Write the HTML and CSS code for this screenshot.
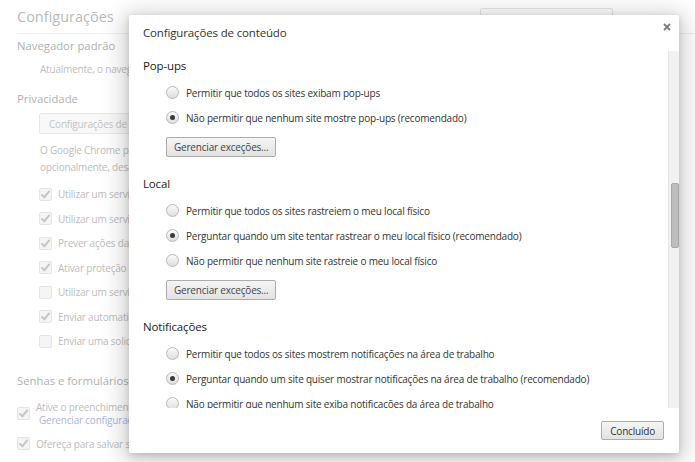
FILE: index.html
```html
<!DOCTYPE html>
<html lang="pt-BR">
<head>
    <meta charset="UTF-8">
    <title>Configurações de conteúdo</title>
    <link rel="stylesheet" href="styles.css">
</head>
<body>

    <!-- Página de configurações (atrás do diálogo) -->
    <div class="page">
        <header class="page-header">
            <h1>Configurações</h1>
            <div class="search"></div>
        </header>

        <section class="bg-section">
            <h2>Navegador padrão</h2>
            <p class="bg-text">Atualmente, o navegador padrão é o Google Chrome.</p>
        </section>

        <section class="bg-section">
            <h2>Privacidade</h2>
            <div class="bg-indent">
                <div class="bg-buttons">
                    <button class="bg-btn">Configurações de conteúdo...</button>
                    <button class="bg-btn">Limpar dados de navegação...</button>
                </div>
                <p class="bg-text para">O Google Chrome pode usar serviços da web para melhorar sua experiência de navegação. Você pode<br>opcionalmente, desativar esses serviços.</p>
                <ul class="checks">
                    <li><span class="cb on"></span>Utilizar um serviço da web para ajudar a resolver erros de navegação</li>
                    <li><span class="cb on"></span>Utilizar um serviço de previsão para ajudar a completar pesquisas</li>
                    <li><span class="cb on"></span>Prever ações da rede para melhorar o desempenho de carregamento</li>
                    <li><span class="cb on"></span>Ativar proteção contra phishing e malware</li>
                    <li><span class="cb"></span>Utilizar um serviço da web para ajudar a resolver erros de ortografia</li>
                    <li><span class="cb on"></span>Enviar automaticamente estatísticas de uso e relatórios de erros</li>
                    <li><span class="cb"></span>Enviar uma solicitação "Não rastrear" com seu tráfego de navegação</li>
                </ul>
            </div>
        </section>

        <section class="bg-section">
            <h2 class="wide">Senhas e formulários</h2>
            <ul class="checks bg-indent">
                <li class="two-line"><span class="cb on"></span><span>Ative o preenchimento automático para preencher formulários<br><a class="bg-link">Gerenciar configurações de preenchimento automático</a></span></li>
                <li><span class="cb on"></span>Ofereça para salvar suas senhas da web</li>
            </ul>
        </section>
    </div>

    <!-- Diálogo -->
    <div class="dialog">
        <div class="dialog-header">
            <h3>Configurações de conteúdo</h3>
            <svg class="close" width="8" height="8" viewBox="0 0 8 8">
                <path d="M1 1 L7 7 M7 1 L1 7" stroke="#7a7a7a" stroke-width="1.8" fill="none"/>
            </svg>
        </div>

        <div class="dialog-body">
            <div class="content">
                <div class="group">
                    <h4>Pop-ups</h4>
                    <div class="option"><span class="radio"></span>Permitir que todos os sites exibam pop-ups</div>
                    <div class="option"><span class="radio on"></span>Não permitir que nenhum site mostre pop-ups (recomendado)</div>
                    <button class="btn">Gerenciar exceções...</button>
                </div>

                <div class="group">
                    <h4>Local</h4>
                    <div class="option"><span class="radio"></span>Permitir que todos os sites rastreiem o meu local físico</div>
                    <div class="option"><span class="radio on"></span>Perguntar quando um site tentar rastrear o meu local físico (recomendado)</div>
                    <div class="option"><span class="radio"></span>Não permitir que nenhum site rastreie o meu local físico</div>
                    <button class="btn">Gerenciar exceções...</button>
                </div>

                <div class="group">
                    <h4>Notificações</h4>
                    <div class="option"><span class="radio"></span>Permitir que todos os sites mostrem notificações na área de trabalho</div>
                    <div class="option"><span class="radio on"></span>Perguntar quando um site quiser mostrar notificações na área de trabalho (recomendado)</div>
                    <div class="option"><span class="radio"></span>Não permitir que nenhum site exiba notificações da área de trabalho</div>
                    <button class="btn">Gerenciar exceções...</button>
                </div>
            </div>

            <div class="scrollbar">
                <div class="thumb"></div>
            </div>
        </div>

        <div class="dialog-footer">
            <button class="btn done">Concluído</button>
        </div>
    </div>

</body>
</html>
```

FILE: styles.css
```css
body {
    margin: 0;
    padding: 0;
    font-family: "Open Sans", "Noto Sans", sans-serif;
    background-color: #ffffff;
    width: 695px;
    height: 462px;
    overflow: hidden;
    position: relative;
}

/* ---- faded settings page ---- */

.page {
    padding-left: 17px;
    color: #b4b4b4;
}

.page-header {
    display: flex;
    align-items: flex-start;
    height: 33px;
    border-bottom: 1px solid #f0f0f0;
    padding-right: 82px;
}

.page-header h1 {
    margin: 0;
    font-size: 14.5px;
    font-weight: normal;
    line-height: 34px;
    color: #b9b9b9;
}

.search {
    margin-left: auto;
    margin-top: 8px;
    width: 131px;
    height: 22px;
    border: 1px solid #e6e6e6;
    border-radius: 2px;
}

.bg-section h2 {
    margin: 3px 0 0;
    font-size: 11.3px;
    font-weight: normal;
    line-height: 18px;
    color: #b0b0b0;
}

.bg-section + .bg-section h2 {
    margin-top: 13px;
}

.bg-section h2.wide {
    margin-top: 18px;
}

.bg-text {
    margin: 6px 0 0 23px;
    font-size: 10px;
    letter-spacing: -0.2px;
    line-height: 16px;
    color: #bdbdbd;
}

.bg-indent {
    margin-left: 22px;
}

.bg-indent .bg-text {
    margin-left: 1px;
}

.bg-buttons {
    display: flex;
    gap: 8px;
    margin-top: 5px;
    white-space: nowrap;
}

.bg-btn {
    height: 21px;
    padding: 0 9px;
    border: 1px solid #e8e8e8;
    border-radius: 2px;
    background-color: #f8f8f8;
    font-family: inherit;
    font-size: 10px;
    letter-spacing: -0.2px;
    color: #c4c4c4;
}

.para {
    margin-top: 8px;
    line-height: 17px;
    white-space: nowrap;
}

.checks {
    list-style: none;
    margin: 6px 0 0;
    padding: 0;
}

.checks li {
    display: flex;
    align-items: center;
    height: 24.5px;
    font-size: 10px;
    letter-spacing: -0.2px;
    color: #bdbdbd;
    white-space: nowrap;
}

.checks.bg-indent {
    margin-top: 13px;
}

.checks li.two-line {
    height: 26px;
    line-height: 13px;
    margin-bottom: 5px;
    margin-top: -2px;
}

.cb {
    width: 11px;
    height: 11px;
    border: 1px solid #e4e4e4;
    border-radius: 2px;
    background-color: #f5f5f5;
    margin-right: 6px;
    position: relative;
    flex-shrink: 0;
}

.cb.on::after {
    content: "";
    position: absolute;
    left: 3px;
    top: 0px;
    width: 3px;
    height: 7px;
    border: solid #c6c6c6;
    border-width: 0 2px 2px 0;
    transform: rotate(40deg);
}

.bg-link {
    margin-left: 3px;
    color: #aab3e8;
}

/* ---- dialog ---- */

.dialog {
    position: absolute;
    left: 129px;
    top: 15px;
    width: 550px;
    height: 438px;
    background-color: #ffffff;
    border-radius: 2px;
    box-shadow: 0 4px 23px 5px rgba(0, 0, 0, 0.2), 0 2px 6px rgba(0, 0, 0, 0.15);
    display: flex;
    flex-direction: column;
}

.dialog-header {
    height: 36px;
    display: flex;
    justify-content: space-between;
    align-items: flex-start;
    flex-shrink: 0;
}

.dialog-header h3 {
    margin: 8px 0 0 14px;
    font-size: 11.5px;
    letter-spacing: -0.15px;
    font-weight: normal;
    line-height: 20px;
    color: #333333;
}

.close {
    margin: 8px 8px 0 0;
}

.dialog-body {
    height: 357px;
    display: flex;
    flex-shrink: 0;
}

.content {
    flex: 1;
    overflow: hidden;
    padding: 5px 0 0 14px;
}

.group {
    margin-bottom: 17px;
}

.group h4 {
    margin: 0 0 4px;
    font-size: 11.5px;
    letter-spacing: -0.15px;
    font-weight: normal;
    line-height: 20px;
    color: #222222;
}

.option {
    display: flex;
    align-items: center;
    height: 25px;
    margin-left: 23px;
    font-size: 10px;
    letter-spacing: -0.2px;
    color: #333333;
    white-space: nowrap;
}

.radio {
    width: 11px;
    height: 11px;
    border: 1px solid #b9b9b9;
    border-radius: 50%;
    background: linear-gradient(#fafafa, #dedede);
    margin-right: 7px;
    position: relative;
    flex-shrink: 0;
}

.radio.on::after {
    content: "";
    position: absolute;
    left: 3px;
    top: 3px;
    width: 5px;
    height: 5px;
    border-radius: 50%;
    background-color: #3a3a3a;
}

.btn {
    display: block;
    height: 20px;
    margin: 7px 0 0 23px;
    padding: 0 7px;
    border: 1px solid #acacac;
    border-radius: 2px;
    background: linear-gradient(#f5f5f5, #e2e2e2);
    font-family: inherit;
    font-size: 10px;
    letter-spacing: -0.2px;
    color: #444444;
}

.scrollbar {
    width: 9px;
    padding-left: 1px;
    border-left: 1px solid #e4e4e4;
    background-color: #f2f2f2;
}

.thumb {
    width: 6px;
    height: 63px;
    margin: 132px 0 0 1px;
    border: 1px solid #a9a9a9;
    border-radius: 2px;
    background-color: #bebebe;
}

.dialog-footer {
    display: flex;
    justify-content: flex-end;
    padding: 13px 15px 0 0;
}

.btn.done {
    height: 19px;
    margin: 0;
    padding: 0 8px;
    color: #333333;
}
```
